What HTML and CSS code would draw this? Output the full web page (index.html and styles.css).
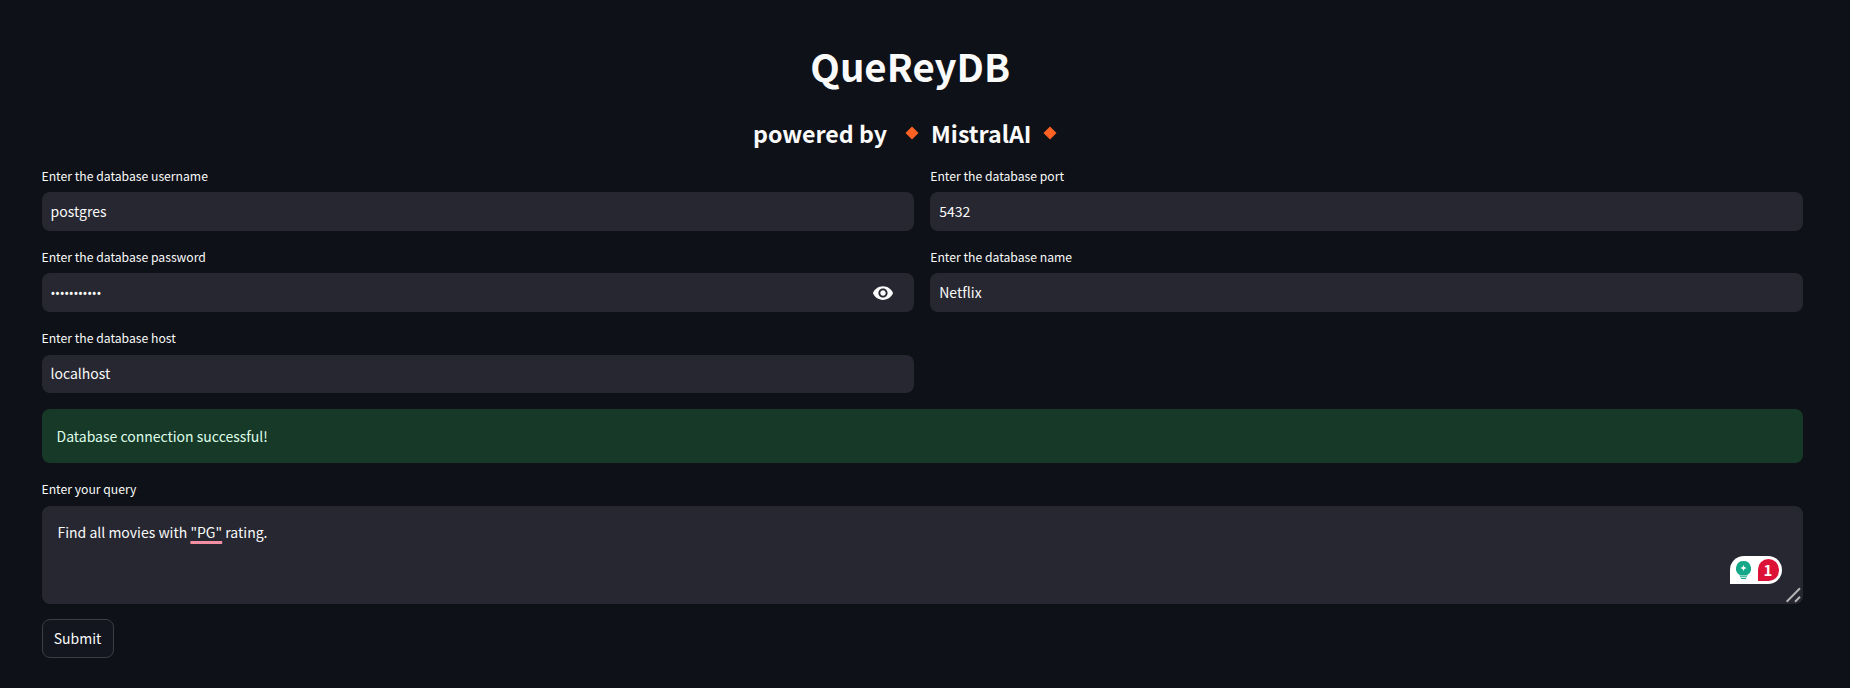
FILE: index.html
```html
<!DOCTYPE html>
<html lang="en">
<head>
<meta charset="utf-8">
<title>QueReyDB</title>
<link rel="stylesheet" href="styles.css">
</head>
<body>
<main class="page">
  <h1 class="title">QueReyDB</h1>
  <h3 class="subtitle">
    <span>powered by</span>
    <svg class="diamond diamond-first" viewBox="0 0 14 14"><path d="M7 0.500 13.500 7 7 13.500 0.500 7Z"/></svg>
    <span>MistralAI</span>
    <svg class="diamond" viewBox="0 0 14 14"><path d="M7 0.500 13.500 7 7 13.500 0.500 7Z"/></svg>
  </h3>
  <section class="grid">
    <div class="column">
      <div class="field">
        <label class="label">Enter the database username</label>
        <div class="input">postgres</div>
      </div>
      <div class="field">
        <label class="label">Enter the database password</label>
        <div class="input">
          <span class="dots">•••••••••••</span>
          <svg class="eye" viewBox="0 0 24 24"><path d="M12 4.500C7 4.500 2.730 7.610 1 12c1.730 4.390 6 7.500 11 7.500s9.270-3.110 11-7.500c-1.730-4.390-6-7.500-11-7.500zM12 17c-2.760 0-5-2.240-5-5s2.240-5 5-5 5 2.240 5 5-2.240 5-5 5zm0-8c-1.660 0-3 1.340-3 3s1.340 3 3 3 3-1.340 3-3-1.340-3-3-3z"/></svg>
        </div>
      </div>
      <div class="field">
        <label class="label">Enter the database host</label>
        <div class="input">localhost</div>
      </div>
    </div>
    <div class="column">
      <div class="field">
        <label class="label">Enter the database port</label>
        <div class="input">5432</div>
      </div>
      <div class="field">
        <label class="label">Enter the database name</label>
        <div class="input">Netflix</div>
      </div>
    </div>
  </section>
  <div class="alert">Database connection successful!</div>
  <div class="field query">
    <label class="label">Enter your query</label>
    <div class="textarea-wrap">
      <div class="textarea">Find all movies with <span class="flag">"PG"</span> rating.</div>
      <div class="grammarly">
        <svg class="bulb" viewBox="0 0 15 18"><path d="M7.500 0a7.500 7.500 0 0 1 4 13.850V14.500h-8v-.65A7.500 7.500 0 0 1 7.500 0z" fill="#15a888"/><path d="M4 15.300h7v.9H4zM5 17h5v1H5z" fill="#15a888"/><path d="M7.500 3.500c.3 2.200 1.100 3.100 3.300 3.500-2.200.4-3 1.300-3.300 3.500-.3-2.200-1.100-3.100-3.300-3.500 2.200-.4 3-1.300 3.300-3.500z" fill="#fff"/></svg>
        <span class="count">1</span>
      </div>
      <svg class="resizer" viewBox="0 0 16 16"><path d="M1.700 14.700 15 1.300M10 14.700l5-5"/></svg>
    </div>
  </div>
  <button class="submit" type="button">Submit</button>
</main>
</body>
</html>
```
FILE: styles.css
```css
* { box-sizing: border-box; }

html, body {
  margin: 0;
  height: 100%;
  background: #0e1117;
}

body {
  color: #fafafa;
  font-family: "Noto Sans CJK SC", "Noto Sans", sans-serif;
  overflow: hidden;
}

.page {
  display: flex;
  flex-direction: column;
  padding: 43px 47px 0 41.500px;
}

.title {
  margin: 0;
  padding-right: 24px;
  height: 44px;
  font-size: 38.400px;
  line-height: 44px;
  font-weight: 700;
  text-align: center;
}

.subtitle {
  display: flex;
  justify-content: center;
  align-items: center;
  margin: 28px 0 0;
  padding-right: 35px;
  height: 36px;
  font-size: 23.200px;
  line-height: 36px;
  font-weight: 600;
}

.diamond {
  width: 14px;
  height: 14px;
  fill: #ff6224;
  margin: 0 0 0 11px;
}

.diamond-first {
  margin: 0 12px 0 18px;
}

.grid {
  display: grid;
  grid-template-columns: 1fr 1fr;
  column-gap: 16px;
  margin-top: 14.800px;
}

.column {
  display: flex;
  flex-direction: column;
  gap: 16.200px;
}

.field {
  display: flex;
  flex-direction: column;
}

.label {
  height: 20px;
  margin-bottom: 6.500px;
  font-size: 12.200px;
  line-height: 20px;
}

.input {
  display: flex;
  align-items: center;
  justify-content: space-between;
  height: 38.500px;
  padding: 0 9px 2px;
  background: #262730;
  border-radius: 8px;
  font-size: 14px;
}

.dots {
  position: relative;
  top: 1px;
  font-family: "Noto Sans", sans-serif;
  font-size: 13px;
  letter-spacing: -0.300px;
}

.eye {
  position: relative;
  top: 1px;
  width: 22px;
  height: 22px;
  fill: #fafafa;
  margin-right: 11.500px;
}

.alert {
  display: flex;
  align-items: center;
  height: 53.800px;
  margin-top: 15.800px;
  padding: 0 15px;
  background: #173928;
  border-radius: 8px;
  font-size: 14px;
  color: #dffde9;
}

.query {
  margin-top: 16px;
}

.query .label {
  margin-bottom: 7.500px;
}

.textarea-wrap {
  position: relative;
}

.textarea {
  height: 98px;
  padding: 13.500px 16px;
  background: #262730;
  border-radius: 8px;
  font-size: 14px;
  line-height: 24px;
}

.flag {
  text-decoration: underline solid #f48fa3 2.500px;
  text-decoration-skip-ink: none;
  text-underline-offset: 3px;
}

.grammarly {
  position: absolute;
  right: 21px;
  bottom: 20px;
  display: flex;
  align-items: center;
  justify-content: space-between;
  width: 52.500px;
  height: 28.700px;
  padding: 0 3.500px 0 6px;
  background: #fff;
  border-radius: 14px 14px 14px 0;
}

.bulb {
  width: 15px;
  height: 18px;
}

.count {
  display: flex;
  align-items: center;
  justify-content: center;
  width: 21px;
  height: 22px;
  background: #dc1237;
  border-radius: 11px 11px 11px 0;
  color: #fff;
  font-size: 15px;
  font-weight: 700;
  line-height: 1;
}

.resizer {
  position: absolute;
  right: 2px;
  bottom: 1px;
  width: 16px;
  height: 16px;
  fill: none;
  stroke: #b4b4b4;
  stroke-width: 2px;
}

.submit {
  width: 72px;
  height: 39px;
  margin-top: 15px;
  padding: 0 0 2px;
  background: #13161e;
  border: 1px solid #3b3d47;
  border-radius: 8px;
  color: #fafafa;
  font-family: inherit;
  font-size: 14px;
}
```
